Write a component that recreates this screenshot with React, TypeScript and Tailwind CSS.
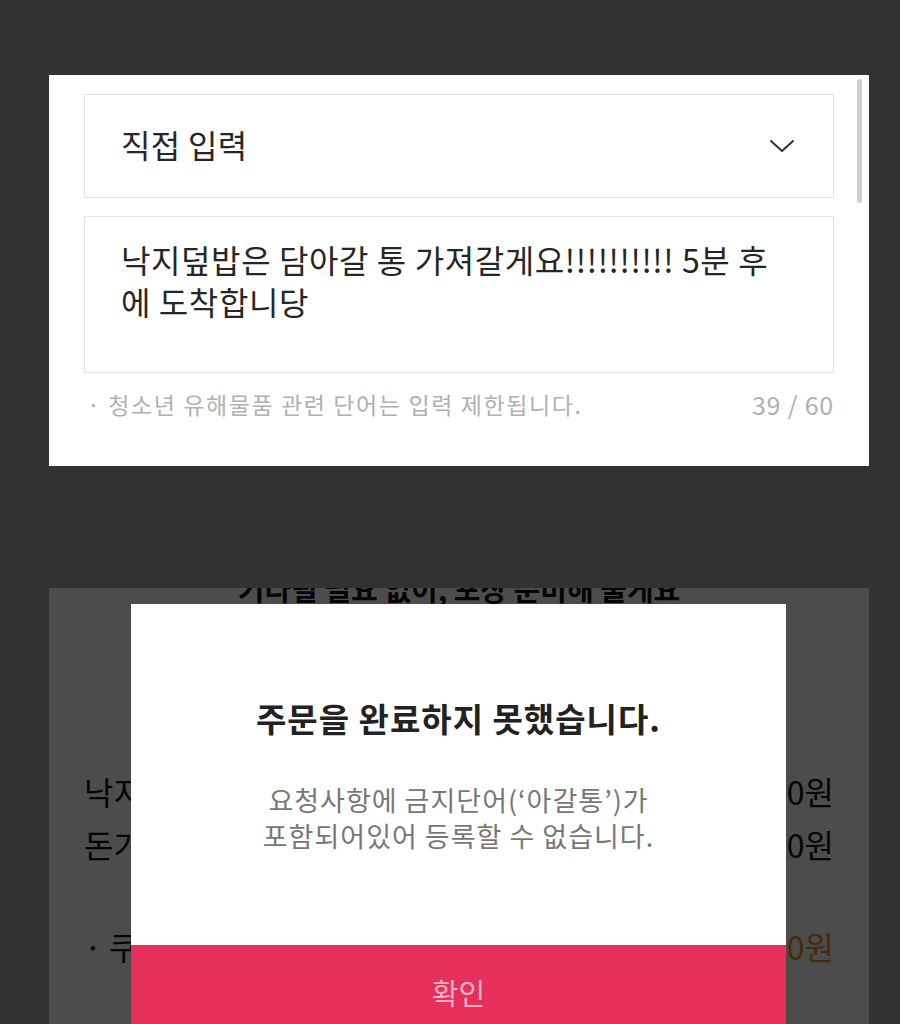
import { useState } from 'react'

const font = { fontFamily: "'Noto Sans CJK KR', 'Noto Sans', sans-serif" }

function Chevron() {
  return (
    <svg width="26" height="16" viewBox="0 0 26 16" fill="none" stroke="#333" strokeWidth="2" strokeLinecap="round" strokeLinejoin="round">
      <polyline points="2,3 13,13 24,3" />
    </svg>
  )
}

function RequestCard() {
  const [memo] = useState('낙지덮밥은 담아갈 통 가져갈게요!!!!!!!!!! 5분 후')
  return (
    <div className="relative ml-[49px] mt-[75px] h-[391px] w-[820px] bg-white px-[35px] pt-[19px]">
      {/* scrollbar */}
      <div className="absolute right-[7px] top-[4px] h-[124px] w-[5px] rounded-full bg-[#cfcfcf]" />

      <div className="flex h-[104px] items-center justify-between border border-[#e2e2e2] pl-[36px] pr-[38px]">
        <span className="-mt-[4px] text-[32px] leading-[40px] tracking-[0.3px] text-[#262626]">직접 입력</span>
        <Chevron />
      </div>

      <div className="mt-[18px] h-[157px] border border-[#e2e2e2] pl-[36px] pt-[21px]">
        <p className="text-[32px] leading-[42px] tracking-[0.6px] text-[#262626]">
          {memo}
          <br />
          에 도착합니당
        </p>
      </div>

      <div className="mt-[17px] flex items-center justify-between pl-[3px]">
        <span className="text-[23px] leading-[28px] tracking-[1.6px] text-[#b0b0b0]">· 청소년 유해물품 관련 단어는 입력 제한됩니다.</span>
        <span className="text-[25px] leading-[28px] tracking-[0.8px] text-[#b0b0b0]">39 / 60</span>
      </div>
    </div>
  )
}

function OrderCard() {
  return (
    <div className="relative ml-[49px] mt-[122px] h-[436px] w-[820px] overflow-hidden bg-white px-[35px]">
      <p className="-mt-[19px] text-center text-[29px] leading-[38px] font-bold text-[#111]">기다릴 필요 없이, 포장 준비해 둘게요</p>

      <div className="mt-[157px] flex flex-col">
        <div className="flex h-[53px] items-center justify-between text-[32px] text-[#111]">
          <span>낙지덮밥 x 1</span>
          <span>12,000원</span>
        </div>
        <div className="flex h-[53px] items-center justify-between text-[32px] text-[#111]">
          <span>돈가스 x 1</span>
          <span>9,000원</span>
        </div>
        <div className="mt-[49px] flex h-[53px] items-center justify-between text-[32px]">
          <span className="text-[#111]">· 쿠폰 할인</span>
          <span className="text-[#f0901e]">-2,000원</span>
        </div>
      </div>

      {/* dim overlay */}
      <div className="absolute inset-0 bg-black/70" />

      {/* alert dialog */}
      <div className="absolute left-[82px] top-[16px] flex w-[655px] flex-col">
        <div className="flex h-[341px] flex-col items-center bg-white pt-[94px]">
          <h2 className="text-[33px] leading-[40px] tracking-[1px] font-bold text-[#222]">주문을 완료하지 못했습니다.</h2>
          <p className="mt-[44px] text-center text-[27px] leading-[36px] tracking-[1px] text-[#777]">
            요청사항에 금지단어(‘아갈통’)가
            <br />
            포함되어있어 등록할 수 없습니다.
          </p>
        </div>
        <button className="flex h-[96px] items-center justify-center bg-[#e5305b] text-[29px] text-[#f6b3c4]">확인</button>
      </div>
    </div>
  )
}

export default function App() {
  return (
    <div className="flex h-[1024px] w-[900px] flex-col overflow-hidden bg-[#323232]" style={font}>
      <RequestCard />
      <OrderCard />
    </div>
  )
}
